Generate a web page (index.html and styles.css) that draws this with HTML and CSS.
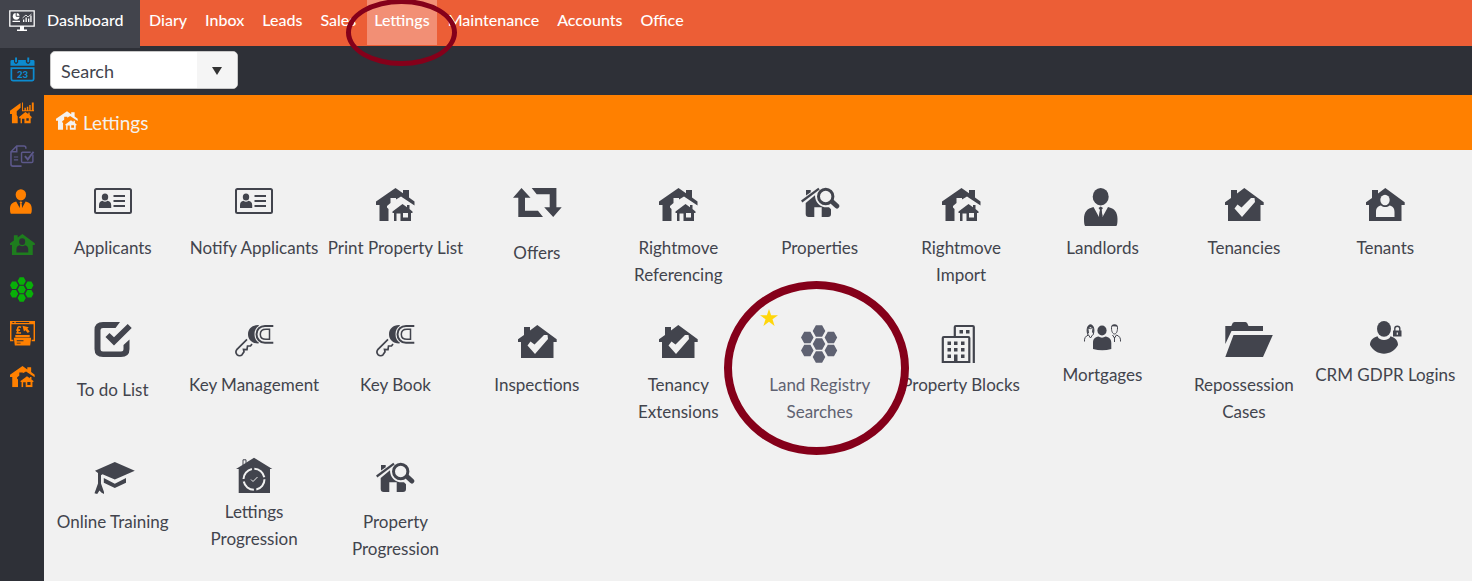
FILE: index.html
```html
<!DOCTYPE html>
<html lang="en">
<head>
<meta charset="utf-8">
<meta name="viewport" content="width=device-width, initial-scale=1">
<title>Lettings</title>
<link rel="stylesheet" href="styles.css">
</head>
<body>
<svg class="symbols" aria-hidden="true">
  <symbol id="houses" viewBox="6 5 39 33">
    <path d="M6 18.500 25.500 5 33 10.300V7h6v7.500l5.500 4v4L31 13.500l-5 3V15h-5.500v5L17 23v1.500l1.500 1.500v12h-9V22H6z"/>
    <path fill-rule="evenodd" d="M22.500 28.500 32.500 21l4.500 3.200V22h2.500v4l3 2.500V30h-1.500v8H30.500v-7.500h-4V38H24v-8h-1.500zM33 30v4.500h5V30z"/>
  </symbol>
  <symbol id="house" viewBox="6 5 39 33">
    <path d="M6 19.300 12 15V7h6v3.500L25.300 5l19.400 14.300V22h-3.200v16H9V22H6z"/>
  </symbol>
  <symbol id="house-check" viewBox="6 5 39 33">
    <use href="#house" x="6" y="5" width="39" height="33"/>
    <path class="cut" d="M15.500 25.500 18.500 21.500 22.500 24.500 32 15 35.500 15 36 19 23 34z"/>
  </symbol>
  <symbol id="house-person" viewBox="6 5 39 33">
    <use href="#house" x="6" y="5" width="39" height="33"/>
    <ellipse class="cut" cx="25" cy="17" rx="4.700" ry="5.200"/>
    <path class="cut" d="M16 34v-5c0-4 2-6 5-6.500 2.500 2 6 2 8.500 0 3 .5 5 2.500 5 6.500v5z"/>
  </symbol>
  <symbol id="house-search" viewBox="6 4 39 31">
    <path d="M11 12.500V7h4.700v2.300zM10.700 20 20 12.200c0 8 6 13 14 12l2 2V31q0 3-3 3h-6.300v-9.700h-7.400V34h-5.600q-3 0-3-3z"/>
    <path class="line" stroke-width="2.200" d="M6.700 18.500 24 5.700"/>
    <circle class="line" stroke-width="3" cx="30.700" cy="13.500" r="7.200"/>
    <path class="line" stroke-width="5" stroke-linecap="round" d="m38 19.500 3.800 3.500"/>
  </symbol>
  <symbol id="agent" viewBox="6 5 34 38">
    <ellipse cx="22.700" cy="13.700" rx="8" ry="8.700"/>
    <path d="M7.200 43Q6 42 6 36c0-7 3-10.500 9.500-12L21 34l1-7-1.500-2 2.200-1.500L25 25l-1.500 2 1 7L30 24c6.500 1.500 9.500 5 9.500 12q0 6-1.200 7z"/>
    <path d="m22 27-1 6 1.700 1.500L24.500 33l-1-6z"/>
  </symbol>
  <symbol id="hexes" viewBox="6 5 37 38">
    <path d="M17.700 11l3.200-5.800h6.200L30.300 11l-3.200 5.800h-6.200zM17.700 24l3.200-5.800h6.200L30.300 24l-3.200 5.800h-6.200zM17.700 37l3.200-5.800h6.200L30.300 37l-3.200 5.800h-6.200zM6 17.500l3.200-5.800h6.200l3.200 5.800-3.200 5.800H9.200zM6 30.500l3.200-5.800h6.200l3.200 5.800-3.200 5.800H9.200zM29.600 17.500l3.200-5.800H39l3.200 5.800-3.200 5.800h-6.200zM29.600 30.500l3.200-5.800H39l3.200 5.800-3.200 5.800h-6.200z"/>
  </symbol>
  <symbol id="card" viewBox="6 5 38 26">
    <rect class="line" stroke-width="2" x="7" y="6" width="36" height="24" rx="1.500"/>
    <ellipse cx="17" cy="14" rx="3.200" ry="3.500"/>
    <path d="M11 25v-3c0-3 1.500-4 3.500-4.300 1.500 1.300 3.500 1.300 5 0 2 .3 3.700 1.300 3.700 4.300v3z"/>
    <path class="line" stroke-width="2" d="M25.500 13H37M25.500 18H37M25.500 23H37"/>
  </symbol>
  <symbol id="key" viewBox="6 5 39 32">
    <path d="M29 5c-6 0-10 4-10 9.200s4 9.300 10 9.300q1-.2 1-.7c-3-2-4.500-4.800-4.500-8.600S27 7.500 30 5.700q0-.5-1-.7z"/>
    <path class="line" stroke-width="2" d="M44.300 6H36c-5 0-8.500 3.500-8.500 8.200s3.500 8.600 8.500 8.600h8.300"/>
    <path class="line" stroke-width="1.500" d="M40.500 9.200H37c-3.500 0-5.700 2-5.700 5s2.200 5.100 5.700 5.100h3.500z"/>
    <path class="line" stroke-width="1.700" d="M18 19.300 8 29.300c-1.500 2-1.200 4 0 5.300 1.500 1.400 3.800 1.400 5 .2l2-3-.5-2.500 3.500.2.500-3.500h3l1.500-2"/>
  </symbol>
</svg>

<header class="topbar">
  <a class="dashboard" href="#">
    <svg class="dashboard-icon" viewBox="0 0 26 22" aria-hidden="true">
      <path class="line" stroke-width="1.300" d="M.8.800h24.400v15.400H.8z"/>
      <path d="M11 16h4v3.500h3V21H8v-1.500h3zM3.500 10.800h7.500V12H3.500zM14 9.500h1.300V12H14zM16.500 7.500h1.300V12h-1.300zM19 8.500h1.300V12H19zM21.300 5.500h1.300V12h-1.300z"/>
      <circle cx="7.200" cy="6.300" r="3.400"/>
      <path class="line" stroke-width=".8" d="m13.500 8 3.500-3 2 2 3.500-3"/>
      <path class="pie-cut" d="M7.200 2.500v3.800h4"/>
    </svg>
    <span>Dashboard</span>
  </a>
  <nav class="menu" aria-label="Main">
    <a href="#">Diary</a>
    <a href="#">Inbox</a>
    <a href="#">Leads</a>
    <a href="#">Sales</a>
    <a class="active" href="#" aria-current="page">Lettings<span class="ring ring-menu"></span></a>
    <a href="#">Maintenance</a>
    <a href="#">Accounts</a>
    <a href="#">Office</a>
  </nav>
</header>

<div class="shell">
  <aside class="sidebar">
    <a class="blue" href="#" aria-label="Calendar">
      <svg viewBox="0 0 26 26">
        <path d="M.5 9V4.500Q.5 3 2 3h2.200v2.500q2 3.500 4.300 0V3h8v2.500q2.300 3.500 4.500 0V3h3q1.500 0 1.500 1.500V9z"/>
        <path d="M5.300.500h2v5h-2zM18 .500h2v5h-2z"/>
        <path class="line" stroke-width="1.800" d="M1.400 11.500h23.200V23q0 1.500-1.500 1.500H3q-1.600 0-1.600-1.500z"/>
        <text class="day" x="13" y="21.500">23</text>
      </svg>
    </a>
    <a class="orange" href="#" aria-label="Market">
      <svg viewBox="0 0 26 22">
        <path d="M0 9 11 1v5L7 9.500v4L8 15v7H2v-9.500H0z"/>
        <path d="M9.500 15.500 16 10.500l3 2V11h1.500v2.500l2 2V17H21.500v5H15v-4.500h-2.500V22H11v-5H9.500zM17 17v2.500h2.500V17z" fill-rule="evenodd"/>
        <path d="M12.500.500h1v8h11.500v1H12.500zM15 6h1.500v2.500H15zM17.500 5h1.500v3.500h-1.500zM20 3h1.500v5.500H20zM22.700.500h2v8h-2z"/>
      </svg>
    </a>
    <a class="purple" href="#" aria-label="Documents">
      <svg viewBox="0 0 26 24">
        <path class="line" stroke-width="1.600" d="M16.500 4V3q0-2-2-2H7L1 7v13q0 2 2 2h9M7 1v6H1"/>
        <path class="line" stroke-width="1.200" d="M4 12.500h4.500M4 15.500h4.500"/>
        <path class="line" stroke-width="1.500" d="M21.500 7.500H13q-1 0-1 1V17q0 1.300 1.200 1.300h9.300q1.300 0 1.300-1.300V10"/>
        <path class="line" stroke-width="2" d="m15.500 11.500 3 3.500 6-8"/>
      </svg>
    </a>
    <a class="orange" href="#" aria-label="Contacts"><svg viewBox="0 0 26 26"><use href="#agent" width="23" height="26"/></svg></a>
    <a class="green" href="#" aria-label="Tenants"><svg viewBox="0 0 26 22"><use href="#house-person" width="26" height="22"/></svg></a>
    <a class="lime" href="#" aria-label="Land registry"><svg viewBox="0 0 26 26"><use href="#hexes" width="25" height="26"/></svg></a>
    <a class="orange" href="#" aria-label="Payments">
      <svg viewBox="0 0 26 26">
        <path d="M0 0h26v21h-3.500v-1.500h2V3.500h-23v16h2V21H0zM2.500 1v1h2V1zM6 1v1h14V1z" fill-rule="evenodd"/>
        <path d="M5.500 14.500h15V17h-15zM4 17.500h18L21 25.500H5zM7 20v1h7v-1zM7 22.500v1h4v-1z" fill-rule="evenodd"/>
        <path class="line" stroke-width="1.700" d="M11.500 6.500Q8 5 8 8v4.500H6.500h5M6.500 9.500h4"/>
        <path d="m13 5 6.500 1.500-1.500 1.500 2.500 3-2 1.500-2.500-3-1.500 1.500z"/>
      </svg>
    </a>
    <a class="orange" href="#" aria-label="Lettings"><svg viewBox="0 0 26 22"><use href="#houses" width="26" height="22"/></svg></a>
  </aside>

  <main class="main">
    <form class="toolbar">
      <div class="search">
        <input class="search-input" type="text" placeholder="Search" aria-label="Search">
        <button class="search-button" type="button" aria-label="Show search options">
          <svg viewBox="0 0 10 8"><path d="M0 0h10L5 8z"/></svg>
        </button>
      </div>
    </form>
    <div class="heading">
      <svg class="heading-icon" viewBox="0 0 22 19" aria-hidden="true"><use href="#houses" width="22" height="19"/></svg>
      <h1>Lettings</h1>
    </div>

    <div class="tiles">
      <a class="tile" href="#"><svg class="icon" viewBox="0 0 50 43"><use href="#card" x="6" y="5" width="38" height="26"/></svg><span>Applicants</span></a>
      <a class="tile" href="#"><svg class="icon" viewBox="0 0 50 43"><use href="#card" x="6" y="5" width="38" height="26"/></svg><span>Notify Applicants</span></a>
      <a class="tile" href="#"><svg class="icon" viewBox="0 0 50 43"><use href="#houses" x="6" y="5" width="39" height="33"/></svg><span>Print Property List</span></a>
      <a class="tile" href="#">
        <svg class="icon icon-tall" viewBox="0 0 50 48"><path d="M9.500 5l9 9.700H13v13h13l5 6.300H6.300V14.700H1zM41.200 34l-9-9.700h5.500v-13h-13l-5-6.300h24.700v19.300h5.300z"/></svg>
        <span>Offers</span>
      </a>
      <a class="tile" href="#"><svg class="icon" viewBox="0 0 50 43"><use href="#houses" x="6" y="5" width="39" height="33"/></svg><span>Rightmove<br>Referencing</span></a>
      <a class="tile" href="#"><svg class="icon" viewBox="0 0 50 43"><use href="#house-search" x="6" y="4" width="39" height="31"/></svg><span>Properties</span></a>
      <a class="tile" href="#"><svg class="icon" viewBox="0 0 50 43"><use href="#houses" x="6" y="5" width="39" height="33"/></svg><span>Rightmove<br>Import</span></a>
      <a class="tile" href="#"><svg class="icon" viewBox="0 0 50 43"><use href="#agent" x="7" y="5" width="34" height="38"/></svg><span>Landlords</span></a>
      <a class="tile" href="#"><svg class="icon" viewBox="0 0 50 43"><use href="#house-check" x="6" y="5" width="39" height="33"/></svg><span>Tenancies</span></a>
      <a class="tile" href="#"><svg class="icon" viewBox="0 0 50 43"><use href="#house-person" x="6" y="5" width="39" height="33"/></svg><span>Tenants</span></a>

      <a class="tile" href="#">
        <svg class="icon icon-tall" viewBox="0 0 50 48">
          <path d="M32 2H15Q6.500 2 6.500 10v19q0 8 8.500 8h18q8.500 0 8.500-8v-9.500L35.500 25v4q0 2.500-2.500 2.500H15q-2.500 0-2.500-2.500V10q0-2 2.500-2h12.500z"/>
          <path d="m17.500 17 4-4 4.500 4.300L39.700 4l4 4L26 25.500z"/>
        </svg>
        <span>To do List</span>
      </a>
      <a class="tile" href="#"><svg class="icon" viewBox="0 0 50 43"><use href="#key" x="6" y="5" width="39" height="32"/></svg><span>Key Management</span></a>
      <a class="tile" href="#"><svg class="icon" viewBox="0 0 50 43"><use href="#key" x="6" y="5" width="39" height="32"/></svg><span>Key Book</span></a>
      <a class="tile" href="#"><svg class="icon" viewBox="0 0 50 43"><use href="#house-check" x="6" y="5" width="39" height="33"/></svg><span>Inspections</span></a>
      <a class="tile" href="#"><svg class="icon" viewBox="0 0 50 43"><use href="#house-check" x="6" y="5" width="39" height="33"/></svg><span>Tenancy<br>Extensions</span></a>
      <a class="tile tile-hover" href="#">
        <svg class="star" viewBox="0 0 18 17" aria-hidden="true"><path d="M9 0l2.100 6.200H18l-5.500 4L14.600 17 9 12.800 3.400 17l2.100-6.800L0 6.200h6.900z"/></svg>
        <svg class="icon" viewBox="0 0 50 43"><use href="#hexes" x="6" y="5" width="37" height="38"/></svg>
        <span>Land Registry<br>Searches</span>
        <i class="ring ring-tile"></i>
      </a>
      <a class="tile" href="#">
        <svg class="icon" viewBox="0 0 50 43">
          <path class="line" stroke-width="2.200" d="M18.800 16V7q0-1 1-1h17q1 0 1 1v36M6.800 42V18q0-1 1-1h24.500q1 0 1 1v24z"/>
          <path d="M23.500 10H27v3.500h-3.500zM30 10h3.500v3.500H30zM11.500 21.500H15V25h-3.500zM18 21.500h3.500V25H18zM25 21.500h3.500V25H25zM11.500 28H15v3.500h-3.500zM18 28h3.500v3.500H18zM25 28h3.500v3.500H25zM11.500 34.500H15V38h-3.500zM18 34.500h3.500V42H18zM25 34.500h3.500V38H25z"/>
        </svg>
        <span>Property Blocks</span>
      </a>
      <a class="tile" href="#">
        <svg class="icon icon-short" viewBox="0 0 50 33">
          <ellipse cx="25" cy="10.500" rx="4.600" ry="5"/>
          <path d="M16 29v-6c0-4 2-6 5.500-6.500 2 1.500 5 1.500 7 0 3.500.5 5.800 2.500 5.800 6.500v6q-9 2.500-18.300 0z"/>
          <path class="line" stroke-width="1" d="M11 15c-2-5-.5-10 2.500-10s4.500 5 2.500 10M11.500 8q2 1.500 4-.5M7.500 21.500q-.5-5 4-6.500l2 3 2-3M34.500 8c0 8 6 8 6 0M35.500 15l2 3 2-3q4.500 1.500 4 6.500M37.500 17v5"/>
          <path d="M10.500 14c-1-5 0-9.500 3-9.500s4 4.500 3 9.500l-1.500-2 .5-4-2.500-1-1.500 2 .5 4zM34 9c-.5-3 1-4.700 3.500-4.700S41.500 6 41 9l-1.500-2.500-4-.2z"/>
        </svg>
        <span>Mortgages</span>
      </a>
      <a class="tile" href="#">
        <svg class="icon" viewBox="0 0 50 43"><path d="M6.300 24V6h6l1.500-3.200L15.500 2h11l1.500.8L29.500 6H44v5H12.500zM14.500 15h39.300L44 37H6.300z"/></svg>
        <span>Repossession<br>Cases</span>
      </a>
      <a class="tile" href="#">
        <svg class="icon icon-short" viewBox="0 0 50 33">
          <ellipse cx="24" cy="8.800" rx="7" ry="7.900"/>
          <path d="M10 25c0-4 2-7 7.500-8.700 1.500 5 11.500 5 13 0C36 18 38 21 38 25c-6 11.500-22 11.500-28 0z"/>
          <path d="M33 10.500h8.500v6H33z"/><path class="line" stroke-width="1.400" d="M34.800 11V8.500c0-3 5-3 5 0V11"/><path class="cut" d="M36.700 12.500h1.200v2.200h-1.200z"/>
        </svg>
        <span>CRM GDPR Logins</span>
      </a>

      <a class="tile" href="#">
        <svg class="icon" viewBox="0 0 50 43">
          <path d="M7 13.700 26.800 5l20 8.700-20 8.800-12.300-5.300-1.500 1v8.300l3 8.500v2l-2.700-1.500-1.800-2-2.300 3.500L6.500 36.300 10 26.500V16z"/>
          <path d="m15.800 21 11 5.700L38 21v4.700L26.800 31l-11-5.300z"/>
        </svg>
        <span>Online Training</span>
      </a>
      <a class="tile" href="#">
        <svg class="icon icon-short" viewBox="0 0 50 33">
          <path d="M7 12 25 .700 43.300 12H41v24H9.700V12z"/>
          <path class="line" stroke-width="1" d="M14 8V2.800h3V6"/>
          <circle class="cut-line" stroke-width="2" stroke-dasharray="14 2.500" cx="25" cy="22.300" r="10.500"/>
          <path class="cut-line" stroke-width="1" d="m22 22.500 2 2 4.500-4.500"/>
        </svg>
        <span>Lettings<br>Progression</span>
      </a>
      <a class="tile" href="#"><svg class="icon" viewBox="0 0 50 43"><use href="#house-search" x="6" y="5" width="39" height="31"/></svg><span>Property<br>Progression</span></a>
    </div>
  </main>
</div>
</body>
</html>
```
FILE: styles.css
```css
* {
  box-sizing: border-box;
}

body {
  margin: 0;
  min-height: 100vh;
  display: flex;
  flex-direction: column;
  overflow-x: hidden;
  background: #f1f1f1;
  color: #42444d;
  font-family: Lato, "Open Sans", sans-serif;
  font-size: 17px;
}

a {
  color: inherit;
  text-decoration: none;
}

svg {
  display: block;
  fill: currentColor;
  overflow: visible;
}

.symbols {
  position: absolute;
  width: 0;
  height: 0;
}

.line {
  fill: none;
  stroke: currentColor;
}

.cut {
  fill: var(--cut);
}

.cut-line {
  fill: none;
  stroke: var(--cut);
}

/* Top menu */
.topbar {
  display: flex;
  height: 46px;
  background: #ec5e36;
  color: #fff;
  font-size: 16px;
  line-height: 24px;
  font-weight: 500;
}

.dashboard {
  z-index: 1;
  display: flex;
  gap: 12px;
  width: 140px;
  height: 48px;
  padding: 8px 0 0 9px;
  background: #42444c;
}

.dashboard-icon {
  width: 26px;
  height: 22px;
  margin-top: 2px;
}

.pie-cut {
  fill: none;
  stroke: #42444c;
}

.menu {
  display: flex;
  gap: 4px;
  padding-left: 2px;
}

.menu a {
  position: relative;
  height: 45px;
  padding: 8px 7px 0;
}

.menu .active {
  z-index: 2;
  background: #f28f75;
}

.ring {
  position: absolute;
  border: 5px solid #85001a;
  border-radius: 50%;
  pointer-events: none;
}

.ring-menu {
  inset: -1px -20px -21px -21px;
}

/* Page body */
.shell {
  flex: 1;
  display: flex;
}

.sidebar {
  --cut: #2e3037;
  flex: 0 0 44px;
  display: flex;
  flex-direction: column;
  gap: 20px;
  padding: 11px 0 0 10px;
  background: #2e3037;
}

.sidebar a {
  display: flex;
  align-items: center;
  height: 24px;
}

.sidebar svg {
  width: 25px;
}

.day {
  font: 900 10px Lato, sans-serif;
  text-anchor: middle;
}

.blue { color: #0c8bd0; }
.orange { color: #ff8000; }
.purple { color: #5c588a; }
.green { color: #1e7d1e; }
.lime { color: #08b008; }

.main {
  flex: 1;
  min-width: 0;
}

.toolbar {
  height: 49px;
  padding: 5px 6px;
  background: #2e3037;
}

.search {
  display: flex;
  width: 188px;
  height: 38px;
  overflow: hidden;
  border: 1px solid #c8c8c8;
  border-radius: 5px;
  background: #fff;
}

.search-input {
  flex: 1;
  min-width: 0;
  padding: 2px 10px 0;
  border: 0;
  background: none;
  color: #33353c;
  font: 18px Lato, sans-serif;
}

.search-input::placeholder {
  color: #42444d;
  opacity: 1;
}

.search-button {
  display: grid;
  place-items: center;
  width: 40px;
  padding: 2px 0 0;
  border: 0;
  background: #f5f5f5;
  color: #333;
}

.search-button svg {
  width: 10px;
  height: 8px;
}

.heading {
  display: flex;
  align-items: center;
  gap: 5px;
  height: 55px;
  padding-left: 12px;
  background: #ff8000;
  color: #f4f1ee;
}

.heading-icon {
  width: 22px;
  height: 19px;
  margin-bottom: 4px;
}

.heading h1 {
  margin: 0;
  font-size: 19px;
  font-weight: 400;
}

/* Tiles */
.tiles {
  --cut: #f1f1f1;
  display: grid;
  grid-template-columns: repeat(10, minmax(0, 1fr));
  grid-auto-rows: minmax(100px, auto);
  row-gap: 32px;
  margin: 33px 16px 0 -2px;
}

.tile {
  position: relative;
  display: flex;
  flex-direction: column;
  align-items: center;
  gap: 8px;
  line-height: 27px;
  text-align: center;
  white-space: nowrap;
}

.tile-hover {
  z-index: 1;
  color: #5f6272;
}

.icon {
  width: 50px;
  height: 43px;
}

.icon-tall {
  height: 48px;
}

.icon-short {
  height: 33px;
}

.star {
  position: absolute;
  top: -11px;
  left: 11px;
  width: 18px;
  height: 17px;
  color: #ffd60a;
}

.ring-tile {
  top: -39px;
  left: 50%;
  width: 185px;
  height: 174px;
  margin-left: -96px;
  border-width: 8px;
}
```
